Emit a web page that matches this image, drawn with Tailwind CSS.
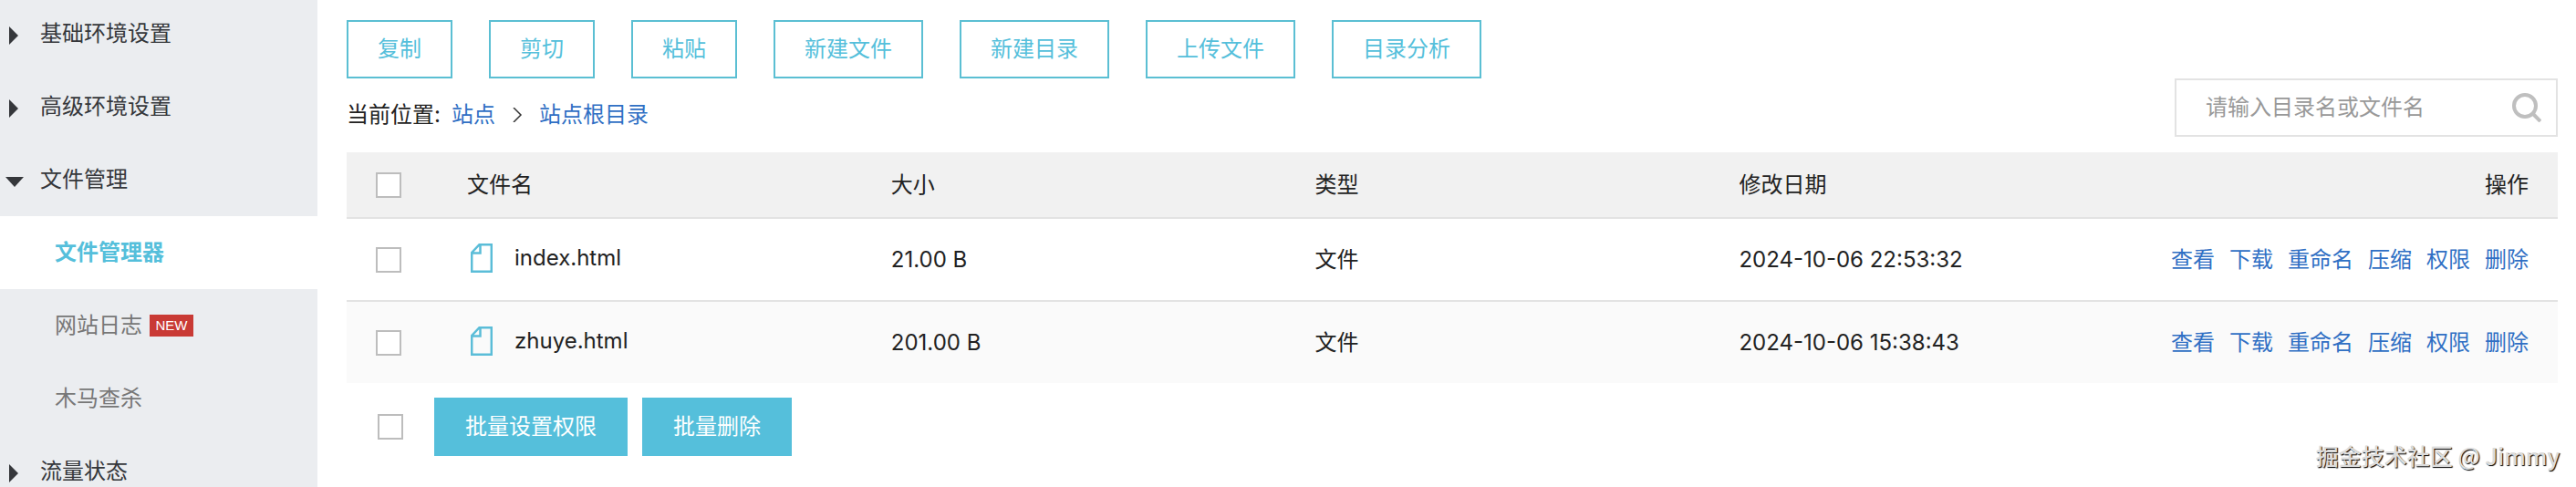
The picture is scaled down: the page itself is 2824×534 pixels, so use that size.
<!DOCTYPE html>
<html lang="zh-CN">
<head>
  <meta charset="UTF-8">
  <meta name="viewport" content="width=device-width, initial-scale=1.0">
  <title>文件管理器</title>
  <script src="https://cdn.jsdelivr.net/npm/@tailwindcss/browser@4"></script>
</head>
<body class="flex h-screen overflow-hidden bg-white font-['Inter','Noto_Sans_CJK_SC',sans-serif] text-2xl text-[#222]">
  <!-- Sidebar -->
  <nav class="-mt-[3px] w-[348px] shrink-0 bg-[#ebedf0] text-[#35373b]">
    <ul>
      <li>
        <a href="#" class="flex h-20 items-center pl-1.5">
          <svg class="mr-[18px] h-6 w-5" viewBox="0 0 20 24" fill="currentColor"><path d="M4 4l10 10L4 24z"/></svg>
          基础环境设置
        </a>
      </li>
      <li>
        <a href="#" class="flex h-20 items-center pl-1.5">
          <svg class="mr-[18px] h-6 w-5" viewBox="0 0 20 24" fill="currentColor"><path d="M4 4l10 10L4 24z"/></svg>
          高级环境设置
        </a>
      </li>
      <li>
        <a href="#" class="flex h-20 items-center pl-1.5">
          <svg class="mr-[18px] h-6 w-5" viewBox="0 0 20 24" fill="currentColor"><path d="M0 9h20L10 20z"/></svg>
          文件管理
        </a>
        <ul class="text-[#777]">
          <li><a href="#" class="flex h-20 items-center bg-white pl-[60px] font-bold text-[#55bfdb]">文件管理器</a></li>
          <li>
            <a href="#" class="flex h-20 items-center gap-2 pl-[60px]">
              网站日志
              <span class="flex h-6 w-12 items-center justify-center bg-[#c93a35] font-['Liberation_Sans',sans-serif] text-[15px] text-white">NEW</span>
            </a>
          </li>
          <li><a href="#" class="flex h-20 items-center pl-[60px]">木马查杀</a></li>
        </ul>
      </li>
      <li>
        <a href="#" class="flex h-20 items-center pl-1.5">
          <svg class="mr-[18px] h-6 w-5" viewBox="0 0 20 24" fill="currentColor"><path d="M4 4l10 10L4 24z"/></svg>
          流量状态
        </a>
      </li>
    </ul>
  </nav>

  <main class="min-w-0 flex-1 pt-[22px] pr-5 pl-8">
    <!-- Toolbar -->
    <div class="flex gap-10 text-[#55bfdb]">
      <button type="button" class="h-16 border-2 border-[#5bbfd3] px-8">复制</button>
      <button type="button" class="h-16 border-2 border-[#5bbfd3] px-8">剪切</button>
      <button type="button" class="h-16 border-2 border-[#5bbfd3] px-8">粘贴</button>
      <button type="button" class="h-16 border-2 border-[#5bbfd3] px-8">新建文件</button>
      <button type="button" class="h-16 border-2 border-[#5bbfd3] px-8">新建目录</button>
      <button type="button" class="h-16 border-2 border-[#5bbfd3] px-8">上传文件</button>
      <button type="button" class="h-16 border-2 border-[#5bbfd3] px-8">目录分析</button>
    </div>

    <!-- Breadcrumb and search -->
    <div class="flex items-end justify-between">
      <div class="flex h-12 items-center">
        <span class="mr-3">当前位置:</span>
        <a href="#" class="text-[#2f6fc4]">站点</a>
        <svg class="mx-4 h-4 w-4" viewBox="0 0 16 16" fill="none" stroke="#333" stroke-width="1.5"><path d="M4 0l8 8-8 8"/></svg>
        <a href="#" class="text-[#2f6fc4]">站点根目录</a>
      </div>
      <form class="flex h-16 w-[420px] items-center border-2 border-[#e3e3e3] pr-4 pl-8">
        <input type="text" aria-label="搜索" placeholder="请输入目录名或文件名" class="min-w-0 flex-1 outline-none placeholder:text-[#999]">
        <button type="submit" aria-label="搜索">
          <svg class="h-8 w-8" viewBox="0 0 32 32" fill="none" stroke="#bfbfbf" stroke-width="4"><circle cx="14" cy="14" r="12"/><path d="M22 22l9 9"/></svg>
        </button>
      </form>
    </div>

    <!-- File list -->
    <table class="mt-[17px] w-full table-fixed text-left">
      <thead>
        <tr class="h-[72px] border-b-2 border-[#e3e3e3] bg-[#f1f1f1]">
          <th class="w-[100px] pl-8"><input type="checkbox" aria-label="全选" class="block size-7 appearance-none border-2 border-[#bdbdbd] bg-white"></th>
          <th class="pl-8 font-normal">文件名</th>
          <th class="pl-8 font-normal">大小</th>
          <th class="pl-8 font-normal">类型</th>
          <th class="pl-8 font-normal">修改日期</th>
          <th class="pr-8 text-right font-normal">操作</th>
        </tr>
      </thead>
      <tbody>
        <tr class="h-[91px] border-b-2 border-[#e3e3e3]">
          <td class="pl-8"><input type="checkbox" aria-label="index.html" class="block size-7 appearance-none border-2 border-[#bdbdbd] bg-white"></td>
          <td class="pb-1 pl-9">
            <div class="flex items-center gap-6">
              <svg class="h-8 w-6" viewBox="0 0 24 32" fill="none" stroke="#5bbdd8" stroke-width="2.5"><path d="M9.500 1.200h13.300v29.600H1.200V10zM10.500 1.200v9.300H1.200"/></svg>
              index.html
            </div>
          </td>
          <td class="pl-8">21.00 B</td>
          <td class="pl-8">文件</td>
          <td class="pl-8">2024-10-06 22:53:32</td>
          <td class="pr-8">
            <div class="flex justify-end gap-4 text-[#2f6fc4]">
              <a href="#">查看</a><a href="#">下载</a><a href="#">重命名</a><a href="#">压缩</a><a href="#">权限</a><a href="#">删除</a>
            </div>
          </td>
        </tr>
        <tr class="h-[90px] bg-[#fafafa]">
          <td class="pl-8"><input type="checkbox" aria-label="zhuye.html" class="block size-7 appearance-none border-2 border-[#bdbdbd] bg-white"></td>
          <td class="pb-1 pl-9">
            <div class="flex items-center gap-6">
              <svg class="h-8 w-6" viewBox="0 0 24 32" fill="none" stroke="#5bbdd8" stroke-width="2.5"><path d="M9.500 1.200h13.300v29.600H1.200V10zM10.500 1.200v9.300H1.200"/></svg>
              zhuye.html
            </div>
          </td>
          <td class="pl-8">201.00 B</td>
          <td class="pl-8">文件</td>
          <td class="pl-8">2024-10-06 15:38:43</td>
          <td class="pr-8">
            <div class="flex justify-end gap-4 text-[#2f6fc4]">
              <a href="#">查看</a><a href="#">下载</a><a href="#">重命名</a><a href="#">压缩</a><a href="#">权限</a><a href="#">删除</a>
            </div>
          </td>
        </tr>
      </tbody>
    </table>

    <!-- Batch actions -->
    <div class="mt-4 flex items-center gap-4 pl-[34px] text-white">
      <input type="checkbox" aria-label="全选" class="mr-[18px] size-7 appearance-none border-2 border-[#bdbdbd] bg-white">
      <button type="button" class="h-16 bg-[#55bfdb] px-[34px]">批量设置权限</button>
      <button type="button" class="h-16 bg-[#55bfdb] px-[34px]">批量删除</button>
    </div>
  </main>

  <!-- Watermark -->
  <p class="absolute right-[18px] bottom-[18px] font-['Noto_Sans_CJK_SC',sans-serif] text-[25px] font-medium text-[#dcdcdc] [text-shadow:1px_1px_1px_#000]">掘金技术社区 @ Jimmy</p>
</body>
</html>
